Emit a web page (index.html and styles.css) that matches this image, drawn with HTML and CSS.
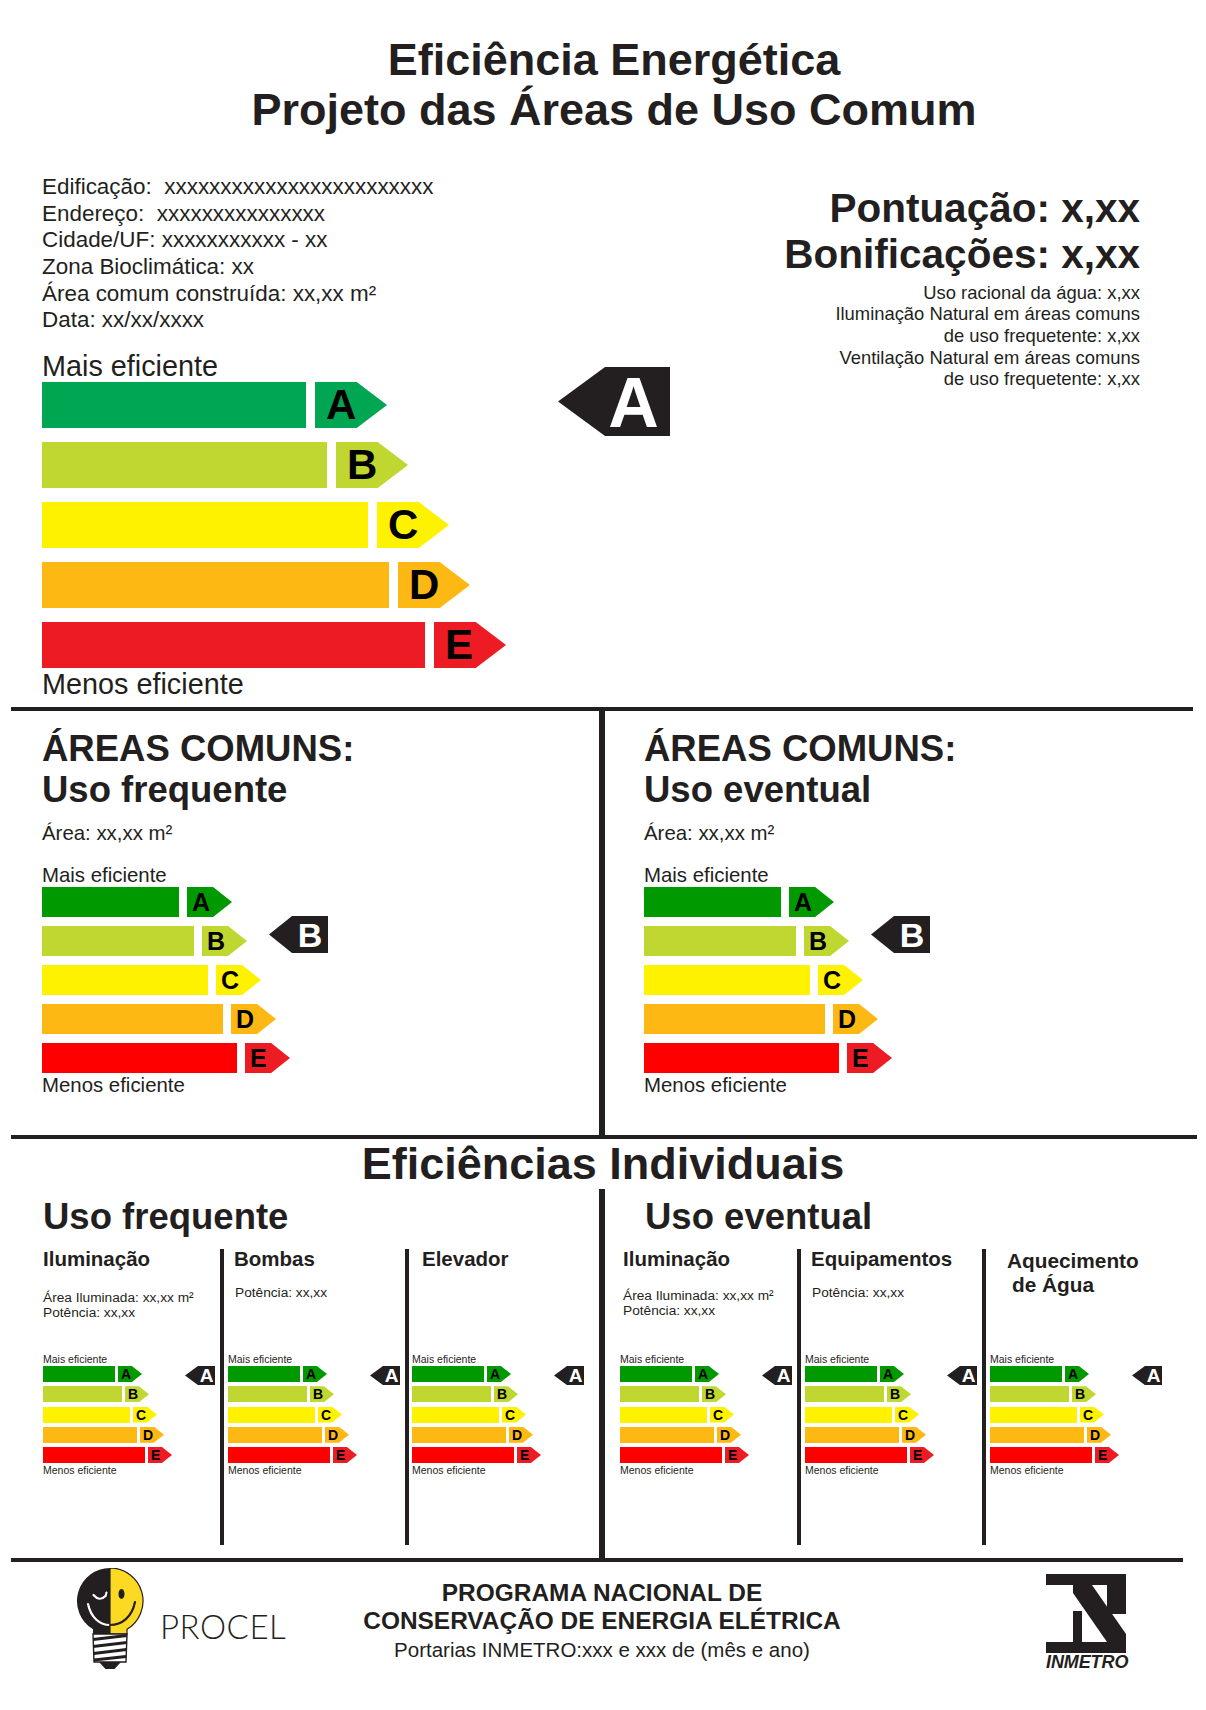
FILE: index.html
```html
<!DOCTYPE html>
<html lang="pt-BR">
<head>
<meta charset="utf-8">
<title>Eficiência Energética</title>
<link rel="stylesheet" href="styles.css">
</head>
<body>
<div class="page">
  <header class="title">
    <div>Eficiência Energética</div>
    <div>Projeto das Áreas de Uso Comum</div>
  </header>

  <section class="top">
    <div class="top-left">
      <div class="info">
        <div>Edificação:&nbsp; xxxxxxxxxxxxxxxxxxxxxxxx</div>
        <div>Endereço:&nbsp; xxxxxxxxxxxxxxx</div>
        <div>Cidade/UF: xxxxxxxxxxx - xx</div>
        <div>Zona Bioclimática: xx</div>
        <div>Área comum construída: xx,xx m²</div>
        <div>Data: xx/xx/xxxx</div>
      </div>
      <div class="chart chart-lg">
        <div class="lbl">Mais eficiente</div>
        <div class="bars">
          <div class="row a"><span class="bar"></span><span class="arr">A</span></div>
          <div class="row b"><span class="bar"></span><span class="arr">B</span></div>
          <div class="row c"><span class="bar"></span><span class="arr">C</span></div>
          <div class="row d"><span class="bar"></span><span class="arr">D</span></div>
          <div class="row e"><span class="bar"></span><span class="arr">E</span></div>
        </div>
        <div class="lbl">Menos eficiente</div>
        <div class="marker">A</div>
      </div>
    </div>
    <div class="top-right">
      <div class="score">Pontuação: x,xx</div>
      <div class="score">Bonificações: x,xx</div>
      <div class="bonus">
        <div>Uso racional da água: x,xx</div>
        <div>Iluminação Natural em áreas comuns</div>
        <div>de uso frequetente: x,xx</div>
        <div>Ventilação Natural em áreas comuns</div>
        <div>de uso frequetente: x,xx</div>
      </div>
    </div>
  </section>

  <div class="hline hline-1"></div>

  <section class="mid">
    <div class="mid-panel mid-l">
      <h2 class="sec-title">ÁREAS COMUNS:<br>Uso frequente</h2>
      <div class="area">Área: xx,xx m²</div>
      <div class="chart chart-md">
        <div class="lbl">Mais eficiente</div>
        <div class="bars">
          <div class="row a"><span class="bar"></span><span class="arr">A</span></div>
          <div class="row b"><span class="bar"></span><span class="arr">B</span></div>
          <div class="row c"><span class="bar"></span><span class="arr">C</span></div>
          <div class="row d"><span class="bar"></span><span class="arr">D</span></div>
          <div class="row e"><span class="bar"></span><span class="arr">E</span></div>
        </div>
        <div class="lbl">Menos eficiente</div>
        <div class="marker">B</div>
      </div>
    </div>
    <div class="mid-panel mid-r">
      <h2 class="sec-title">ÁREAS COMUNS:<br>Uso eventual</h2>
      <div class="area">Área: xx,xx m²</div>
      <div class="chart chart-md">
        <div class="lbl">Mais eficiente</div>
        <div class="bars">
          <div class="row a"><span class="bar"></span><span class="arr">A</span></div>
          <div class="row b"><span class="bar"></span><span class="arr">B</span></div>
          <div class="row c"><span class="bar"></span><span class="arr">C</span></div>
          <div class="row d"><span class="bar"></span><span class="arr">D</span></div>
          <div class="row e"><span class="bar"></span><span class="arr">E</span></div>
        </div>
        <div class="lbl">Menos eficiente</div>
        <div class="marker">B</div>
      </div>
    </div>
  </section>

  <div class="hline hline-2"></div>

  <h2 class="ind-title">Eficiências Individuais</h2>

  <section class="ind">
    <div class="ind-col ind-l">
      <h3 class="col-title">Uso frequente</h3>
      <div class="subrow">
        <div class="sp sp-l1">
          <div class="sp-head">
            <div class="sp-title">Iluminação</div>
            <div class="sp-info gap2">Área Iluminada: xx,xx m²<br>Potência: xx,xx</div>
          </div>
          <div class="chart chart-sm">
            <div class="lbl">Mais eficiente</div>
            <div class="bars">
              <div class="row a"><span class="bar"></span><span class="arr">A</span></div>
              <div class="row b"><span class="bar"></span><span class="arr">B</span></div>
              <div class="row c"><span class="bar"></span><span class="arr">C</span></div>
              <div class="row d"><span class="bar"></span><span class="arr">D</span></div>
              <div class="row e"><span class="bar"></span><span class="arr">E</span></div>
            </div>
            <div class="lbl">Menos eficiente</div>
            <div class="marker">A</div>
          </div>
        </div>
        <div class="sp sp-l2">
          <div class="sp-head">
            <div class="sp-title">Bombas</div>
            <div class="sp-info gap1">Potência: xx,xx</div>
          </div>
          <div class="chart chart-sm">
            <div class="lbl">Mais eficiente</div>
            <div class="bars">
              <div class="row a"><span class="bar"></span><span class="arr">A</span></div>
              <div class="row b"><span class="bar"></span><span class="arr">B</span></div>
              <div class="row c"><span class="bar"></span><span class="arr">C</span></div>
              <div class="row d"><span class="bar"></span><span class="arr">D</span></div>
              <div class="row e"><span class="bar"></span><span class="arr">E</span></div>
            </div>
            <div class="lbl">Menos eficiente</div>
            <div class="marker">A</div>
          </div>
        </div>
        <div class="sp sp-l3">
          <div class="sp-head">
            <div class="sp-title">Elevador</div>
          </div>
          <div class="chart chart-sm">
            <div class="lbl">Mais eficiente</div>
            <div class="bars">
              <div class="row a"><span class="bar"></span><span class="arr">A</span></div>
              <div class="row b"><span class="bar"></span><span class="arr">B</span></div>
              <div class="row c"><span class="bar"></span><span class="arr">C</span></div>
              <div class="row d"><span class="bar"></span><span class="arr">D</span></div>
              <div class="row e"><span class="bar"></span><span class="arr">E</span></div>
            </div>
            <div class="lbl">Menos eficiente</div>
            <div class="marker">A</div>
          </div>
        </div>
      </div>
    </div>
    <div class="ind-col ind-r">
      <h3 class="col-title">Uso eventual</h3>
      <div class="subrow">
        <div class="sp sp-r1">
          <div class="sp-head">
            <div class="sp-title">Iluminação</div>
            <div class="sp-info gap2r">Área Iluminada: xx,xx m²<br>Potência: xx,xx</div>
          </div>
          <div class="chart chart-sm">
            <div class="lbl">Mais eficiente</div>
            <div class="bars">
              <div class="row a"><span class="bar"></span><span class="arr">A</span></div>
              <div class="row b"><span class="bar"></span><span class="arr">B</span></div>
              <div class="row c"><span class="bar"></span><span class="arr">C</span></div>
              <div class="row d"><span class="bar"></span><span class="arr">D</span></div>
              <div class="row e"><span class="bar"></span><span class="arr">E</span></div>
            </div>
            <div class="lbl">Menos eficiente</div>
            <div class="marker">A</div>
          </div>
        </div>
        <div class="sp sp-r2">
          <div class="sp-head">
            <div class="sp-title">Equipamentos</div>
            <div class="sp-info gap1">Potência: xx,xx</div>
          </div>
          <div class="chart chart-sm">
            <div class="lbl">Mais eficiente</div>
            <div class="bars">
              <div class="row a"><span class="bar"></span><span class="arr">A</span></div>
              <div class="row b"><span class="bar"></span><span class="arr">B</span></div>
              <div class="row c"><span class="bar"></span><span class="arr">C</span></div>
              <div class="row d"><span class="bar"></span><span class="arr">D</span></div>
              <div class="row e"><span class="bar"></span><span class="arr">E</span></div>
            </div>
            <div class="lbl">Menos eficiente</div>
            <div class="marker">A</div>
          </div>
        </div>
        <div class="sp sp-r3">
          <div class="sp-head">
            <div class="sp-title sp-title-2">Aquecimento<br><span class="indent">de Água</span></div>
          </div>
          <div class="chart chart-sm">
            <div class="lbl">Mais eficiente</div>
            <div class="bars">
              <div class="row a"><span class="bar"></span><span class="arr">A</span></div>
              <div class="row b"><span class="bar"></span><span class="arr">B</span></div>
              <div class="row c"><span class="bar"></span><span class="arr">C</span></div>
              <div class="row d"><span class="bar"></span><span class="arr">D</span></div>
              <div class="row e"><span class="bar"></span><span class="arr">E</span></div>
            </div>
            <div class="lbl">Menos eficiente</div>
            <div class="marker">A</div>
          </div>
        </div>
      </div>
    </div>
  </section>

  <div class="hline hline-3"></div>

  <footer class="footer">
    <div class="procel">
      <svg class="bulb" width="70" height="102" viewBox="0 0 70 102" aria-hidden="true">
        <path d="M35 0 A33 33 0 0 1 52 61.3 L52 66 L35 66 Z" fill="#fcd923" stroke="#231f20" stroke-width="1.2"/>
        <path d="M35 0 A33 33 0 0 0 18 61.3 L18 66 L35 66 Z" fill="#231f20"/>
        <path d="M18.5 27 Q24.5 34 30.5 28" fill="none" stroke="#fff" stroke-width="2.2" stroke-linecap="round"/>
        <path d="M30.5 28 L31.5 24.5" fill="none" stroke="#fff" stroke-width="2" stroke-linecap="round"/>
        <ellipse cx="46.5" cy="26" rx="3" ry="5" fill="#231f20"/>
        <path d="M13 36 C16 50 25 57 35 57" fill="none" stroke="#fff" stroke-width="2.2" stroke-linecap="round"/>
        <path d="M35 57 C47 57 57 49 60 34" fill="none" stroke="#231f20" stroke-width="2.2" stroke-linecap="round"/>
        <path d="M18 66 L52 66 L51 94 L19 94 Z" fill="#fff" stroke="#231f20" stroke-width="1.4"/>
        <path d="M18 71.5 L52 67.5 M18 78.5 L52 74.5 M18.5 85.5 L51.5 81.5 M19 92 L51 88.5" fill="none" stroke="#231f20" stroke-width="2.8"/>
        <path d="M24 94 L46 94 L39.5 101 L30.5 101 Z" fill="#231f20"/>
      </svg>
      <span class="procel-name">PROCEL</span>
    </div>
    <div class="program">
      <div class="program-name">PROGRAMA NACIONAL DE<br>CONSERVAÇÃO DE ENERGIA ELÉTRICA</div>
      <div class="portarias">Portarias INMETRO:xxx e xxx de (mês e ano)</div>
    </div>
    <div class="inmetro">
      <svg class="inmetro-mark" width="80" height="79" viewBox="0 0 80 79" aria-hidden="true">
        <g fill="#231f20">
          <rect x="0" y="0" width="80" height="11"/>
          <rect x="0" y="68" width="80" height="11"/>
          <rect x="61" y="11" width="19" height="29"/>
          <rect x="27" y="37" width="9" height="31"/>
          <polygon points="27,11 46,11 80,60 80,68 61,68 27,19"/>
        </g>
      </svg>
      <div class="inmetro-name">INMETRO</div>
    </div>
  </footer>
</div>
</body>
</html>
```

FILE: styles.css
```css
* { box-sizing: border-box; margin: 0; padding: 0; }

html, body { background: #ffffff; }

body {
  margin: 0;
  color: #231f20;
  font-family: "Liberation Sans", Arial, Helvetica, sans-serif;
}

.page {
  width: 1206px;
  height: 1710px;
  overflow: hidden;
}

/* ---------- title ---------- */
.title {
  padding-top: 35px;
  padding-left: 22px;
  text-align: center;
  font-size: 45px;
  font-weight: 700;
  line-height: 50px;
}

/* ---------- top section ---------- */
.top {
  display: flex;
  align-items: flex-start;
}

.top-left {
  width: 700px;
  padding-left: 42px;
}

.info {
  padding-top: 39px;
  font-size: 22.45px;
  line-height: 26.67px;
  white-space: nowrap;
}

.top-right {
  flex: 1;
  padding-top: 50px;
  padding-right: 66px;
  text-align: right;
  white-space: nowrap;
}

.score {
  font-size: 40.5px;
  font-weight: 700;
  line-height: 46px;
}

.bonus {
  margin-top: 4.6px;
  font-size: 18.4px;
  line-height: 21.7px;
}

/* ---------- charts (shared) ---------- */
.chart { position: relative; }

.bars {
  display: flex;
  flex-direction: column;
}

.row {
  display: flex;
  align-items: stretch;
}

.bar { display: block; height: 100%; }

.arr {
  display: block;
  height: 100%;
  font-weight: 700;
  color: #000;
  clip-path: polygon(0 0, 58% 0, 100% 50%, 58% 100%, 0 100%);
}

.marker {
  position: absolute;
  background: #231f20;
  color: #fff;
  font-weight: 700;
  text-align: center;
  clip-path: polygon(0 50%, 42% 0, 100% 0, 100% 100%, 42% 100%);
}

/* colours */
.chart .b .bar, .chart .b .arr { background: #bfd730; }
.chart .c .bar, .chart .c .arr { background: #fff200; }
.chart .d .bar, .chart .d .arr { background: #fdb813; }
.chart-lg .a .bar, .chart-lg .a .arr { background: #00a651; }
.chart-lg .e .bar, .chart-lg .e .arr { background: #ed1c24; }
.chart-md .a .bar, .chart-md .a .arr,
.chart-sm .a .bar, .chart-sm .a .arr { background: #009900; }
.chart-md .e .bar, .chart-sm .e .bar { background: #ff0000; }
.chart-md .e .arr, .chart-sm .e .arr { background: #ed1c24; }

/* large chart */
.chart-lg { margin-top: 16px; }
.chart-lg .lbl { font-size: 28.8px; line-height: 32px; }
.chart-lg .bars { gap: 14px; }
.chart-lg .row { height: 46px; column-gap: 9px; }
.chart-lg .arr { width: 72px; font-size: 42px; line-height: 46px; padding-left: 11px; }
.chart-lg .a .bar { width: 264px; }
.chart-lg .b .bar { width: 285px; }
.chart-lg .c .bar { width: 326px; }
.chart-lg .d .bar { width: 347px; }
.chart-lg .e .bar { width: 383px; }
.chart-lg .marker {
  left: 516px;
  top: 17px;
  width: 112px;
  height: 69px;
  padding-left: 47px;
  padding-right: 8px;
  font-size: 70px;
  line-height: 72px;
}

/* ---------- divider lines ---------- */
.hline {
  height: 4px;
  margin-left: 11px;
  background: #231f20;
}
.hline-1 { margin-top: 7px; width: 1182px; }
.hline-2 { width: 1186px; }
.hline-3 { width: 1172px; }

/* ---------- middle section ---------- */
.mid {
  display: flex;
  height: 424px;
}

.mid-panel { padding-top: 17px; }
.mid-l { width: 599px; padding-left: 42px; }
.mid-r { flex: 1; border-left: 6px solid #231f20; padding-left: 39px; }

.sec-title {
  font-size: 36.5px;
  font-weight: 700;
  line-height: 41px;
}

.area {
  margin-top: 11px;
  font-size: 20.4px;
  line-height: 24px;
}

.chart-md { margin-top: 18px; }
.chart-md .lbl { font-size: 20.4px; line-height: 24px; }
.chart-md .bars { gap: 9px; }
.chart-md .row { height: 30px; column-gap: 8px; }
.chart-md .arr { width: 45px; font-size: 25px; line-height: 30px; padding-left: 5px; }
.chart-md .a .bar { width: 137px; }
.chart-md .b .bar { width: 152px; }
.chart-md .c .bar { width: 166px; }
.chart-md .d .bar { width: 181px; }
.chart-md .e .bar { width: 195px; }
.chart-md .marker {
  left: 227px;
  top: 53px;
  width: 59px;
  height: 37px;
  padding-left: 23px;
  font-size: 34px;
  line-height: 38px;
  clip-path: polygon(0 50%, 39% 0, 100% 0, 100% 100%, 39% 100%);
}

/* ---------- individual section ---------- */
.ind-title {
  text-align: center;
  font-size: 45px;
  font-weight: 700;
  line-height: 50px;
}

.ind {
  display: flex;
  height: 369px;
}

.ind-col { padding-top: 7px; }
.ind-l { width: 599px; }
.ind-r { flex: 1; border-left: 6px solid #231f20; }

.col-title {
  font-size: 36.5px;
  font-weight: 700;
  line-height: 41px;
}
.ind-l .col-title { margin-left: 43px; }
.ind-r .col-title { margin-left: 40px; }

.subrow {
  display: flex;
  height: 296px;
  margin-top: 12px;
}

.sp { height: 100%; }
.sp-l1 { width: 220px; padding-left: 43px; }
.sp-l2 { width: 185px; border-left: 4px solid #231f20; padding-left: 4px; }
.sp-l3 { flex: 1; border-left: 4px solid #231f20; padding-left: 3px; }
.sp-r1 { width: 192px; padding-left: 15px; }
.sp-r2 { width: 185px; border-left: 4px solid #231f20; padding-left: 4px; }
.sp-r3 { flex: 1; border-left: 4px solid #231f20; padding-left: 4px; }

.sp-head { height: 103px; }

.sp-title {
  font-size: 20.5px;
  font-weight: 700;
  line-height: 20px;
  white-space: nowrap;
}
.sp-title-2 { font-size: 20.8px; line-height: 24px; }
.indent { padding-left: 5px; }

.sp-l2 .sp-title, .sp-r2 .sp-title { margin-left: 6px; }
.sp-l3 .sp-title { margin-left: 10px; }
.sp-r1 .sp-title { margin-left: 3px; }
.sp-r3 .sp-title { margin-left: 17px; }

.sp-info {
  font-size: 13.7px;
  line-height: 15px;
  white-space: nowrap;
}
.gap2 { margin-top: 21px; }
.gap2r { margin-top: 19px; margin-left: 3px; }
.gap1 { margin-top: 16px; margin-left: 7px; }

.chart-sm .lbl { font-size: 10.5px; line-height: 14px; white-space: nowrap; }
.chart-sm .bars { gap: 4.25px; }
.chart-sm .row { height: 16px; column-gap: 3px; }
.chart-sm .arr { width: 24px; font-size: 14px; line-height: 16px; padding-left: 3px; }
.chart-sm .a .bar { width: 72px; }
.chart-sm .b .bar { width: 79px; }
.chart-sm .c .bar { width: 87px; }
.chart-sm .d .bar { width: 94px; }
.chart-sm .e .bar { width: 102px; }
.chart-sm .marker {
  left: 142px;
  top: 14px;
  width: 30px;
  height: 19px;
  padding-left: 13px;
  font-size: 19px;
  line-height: 20px;
  clip-path: polygon(0 50%, 43% 0, 100% 0, 100% 100%, 43% 100%);
}

/* ---------- footer ---------- */
.footer {
  display: grid;
  grid-template-columns: 300px 604px 302px;
  height: 148px;
}

.procel {
  display: flex;
  align-items: flex-start;
  padding-left: 75px;
}

.bulb {
  display: block;
  margin-top: 6px;
  flex: none;
}

.procel-name {
  margin-top: 47.7px;
  margin-left: 15px;
  font-family: Lato, "Liberation Sans", sans-serif;
  font-weight: 300;
  font-size: 33px;
  line-height: 33px;
  letter-spacing: 0.5px;
}

.program {
  text-align: center;
  padding-top: 17.4px;
}

.program-name {
  font-size: 24.45px;
  font-weight: 700;
  line-height: 28px;
}

.portarias {
  margin-top: 1.2px;
  font-size: 20.5px;
  line-height: 26px;
}

.inmetro {
  padding-left: 142px;
  padding-top: 12px;
}

.inmetro-mark { display: block; }

.inmetro-name {
  width: 84px;
  font-size: 18px;
  font-weight: 700;
  font-style: italic;
  line-height: 18px;
  letter-spacing: -0.1px;
}
```
